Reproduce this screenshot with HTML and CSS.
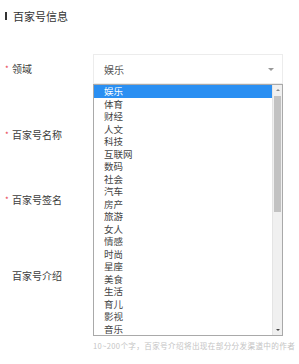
FILE: index.html
```html
<!DOCTYPE html>
<html lang="zh-CN">
<head>
  <meta charset="UTF-8" />
  <meta name="viewport" content="width=device-width, initial-scale=1.0"/>
  <title>百家号信息</title>
  <link rel="stylesheet" href="styles.css">
</head>
<body>
  <div class="panel">
    <!-- Section title -->
    <div class="title"><span class="title-bar"></span>百家号信息</div>

    <div class="form">
      <div class="row">
        <label class="label"><span class="star">*</span>领域</label>
        <div class="control select">
          <span class="select-value">娱乐</span>
          <span class="select-arrow"></span>

          <!-- Open option list -->
          <div class="options">
            <ul class="option-list">
              <li class="active">娱乐</li>
              <li>体育</li>
              <li>财经</li>
              <li>人文</li>
              <li>科技</li>
              <li>互联网</li>
              <li>数码</li>
              <li>社会</li>
              <li>汽车</li>
              <li>房产</li>
              <li>旅游</li>
              <li>女人</li>
              <li>情感</li>
              <li>时尚</li>
              <li>星座</li>
              <li>美食</li>
              <li>生活</li>
              <li>育儿</li>
              <li>影视</li>
              <li>音乐</li>
            </ul>
            <div class="scrollbar">
              <span class="sb-btn sb-up"></span>
              <span class="sb-track"><span class="sb-thumb"></span></span>
              <span class="sb-btn sb-down"></span>
            </div>
          </div>
        </div>
      </div>

      <div class="row row-name">
        <label class="label"><span class="star">*</span>百家号名称</label>
        <div class="control input"></div>
      </div>

      <div class="row row-sign">
        <label class="label"><span class="star">*</span>百家号签名</label>
        <div class="control input"></div>
      </div>

      <div class="row row-intro">
        <label class="label"><span class="star"></span>百家号介绍</label>
        <div class="intro-col">
          <div class="control textarea"></div>
          <p class="hint">10~200个字，百家号介绍将出现在部分分发渠道中的作者</p>
        </div>
      </div>
    </div>
  </div>
</body>
</html>
```

FILE: styles.css
```css
body {
  margin: 0;
  background: #fff;
  color: #333;
  font-family: "Noto Sans CJK SC", "Noto Sans", sans-serif;
}

.panel {
  padding: 10px 0 0 5px;
}

.title {
  display: flex;
  align-items: center;
  gap: 6px;
  height: 12px;
  font-size: 11px;
  line-height: 12px;
  color: #333;
}

.title-bar {
  width: 2px;
  height: 8px;
  background: #333;
}

.form {
  margin-top: 32px;
}

.row {
  display: flex;
  align-items: center;
  height: 30px;
}

.row-name {
  margin-top: 36px;
}

.row-sign {
  margin-top: 35px;
}

.row-intro {
  margin-top: 30px;
  height: auto;
  align-items: flex-start;
}

.label {
  display: flex;
  align-items: center;
  flex-shrink: 0;
  width: 88px;
  font-size: 10px;
  line-height: 12px;
  color: #3c3c3c;
}

.row-intro .label {
  padding-top: 25px;
}

.star {
  width: 7px;
  color: #e8394a;
  font-size: 8px;
}

.control {
  box-sizing: border-box;
  flex-shrink: 0;
  width: 190px;
  height: 30px;
  border: 1px solid #ececec;
  background: #fff;
}

.select {
  position: relative;
  display: flex;
  align-items: center;
  padding-left: 10px;
  font-size: 10px;
  color: #555;
}

.select-value {
  flex: 1;
}

.select-arrow {
  margin-right: 8px;
  width: 0;
  height: 0;
  border-left: 3px solid transparent;
  border-right: 3px solid transparent;
  border-top: 3px solid #999;
}

.options {
  position: absolute;
  left: -1px;
  top: 29px;
  z-index: 5;
  box-sizing: border-box;
  width: 190px;
  height: 252px;
  display: flex;
  border: 1px solid #a9a9a9;
  background: #fff;
}

.option-list {
  flex: 1;
  margin: 0;
  padding: 0;
  list-style: none;
}

.option-list li {
  height: 12.5px;
  padding-left: 10px;
  font-size: 9.5px;
  line-height: 12.5px;
  color: #444;
}

.option-list li.active {
  background: #2a8ff2;
  color: #fff;
}

.scrollbar {
  width: 9px;
  display: flex;
  flex-direction: column;
  background: #f0f0f0;
  border-left: 1px solid #e4e4e4;
}

.sb-btn {
  height: 10px;
  display: flex;
  align-items: center;
  justify-content: center;
}

.sb-btn::before {
  content: "";
  width: 0;
  height: 0;
  border-left: 2px solid transparent;
  border-right: 2px solid transparent;
}

.sb-up::before {
  border-bottom: 2px solid #888;
}

.sb-down::before {
  border-top: 2px solid #444;
}

.sb-track {
  flex: 1;
  padding-top: 1px;
}

.sb-thumb {
  display: block;
  margin: 0 1px;
  height: 116px;
  background: #c2c2c2;
}

.intro-col {
  display: flex;
  flex-direction: column;
}

.textarea {
  height: 91px;
}

.hint {
  margin: 5px 0 0;
  font-size: 7.6px;
  letter-spacing: 0.35px;
  line-height: 10px;
  color: #c4c4c4;
  white-space: nowrap;
}
```
